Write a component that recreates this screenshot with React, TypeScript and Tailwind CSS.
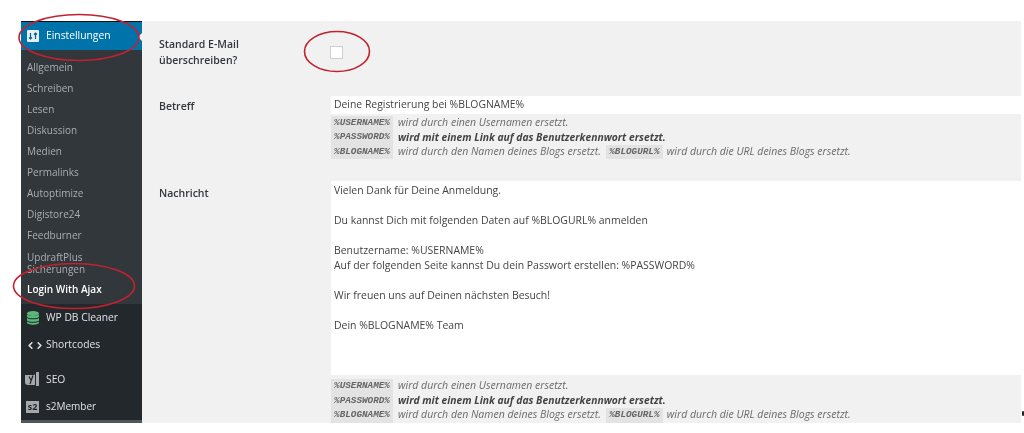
import { ChevronLeft, ChevronRight } from "lucide-react";

const subItems = ["Allgemein", "Schreiben", "Lesen", "Diskussion", "Medien", "Permalinks", "Autoptimize", "Digistore24", "Feedburner"];

const Code = ({ children, width = "w-[62px]" }: { children: string; width?: string }) => (
  <code className={`${width} flex h-[14.5px] items-center justify-center bg-[#e3e3e3] font-['Liberation_Mono',monospace] text-[9.3px] font-bold italic text-[#666]`}>
    {children}
  </code>
);

const Placeholders = () => (
  <div className="text-[10.5px] italic text-[#6a6a6a]">
    <div className="flex h-[14.5px] items-center gap-[5px]">
      <Code>%USERNAME%</Code>
      <span>wird durch einen Usernamen ersetzt.</span>
    </div>
    <div className="flex h-[14.5px] items-center gap-[5px] text-[10.3px] font-bold text-[#444]">
      <Code>%PASSWORD%</Code>
      <span>wird mit einem Link auf das Benutzerkennwort ersetzt.</span>
    </div>
    <div className="flex h-[14.5px] items-center gap-[5px]">
      <Code>%BLOGNAME%</Code>
      <span>wird durch den Namen deines Blogs ersetzt.</span>
      <Code width="w-[57px]">%BLOGURL%</Code>
      <span className="-ml-[1px]">wird durch die URL deines Blogs ersetzt.</span>
    </div>
  </div>
);

const Sidebar = () => (
  <div className="flex h-[402px] w-[121px] shrink-0 flex-col bg-[#23282d] text-[10.3px]">
    <div className="h-[1px] bg-[#111]" />
    {/* active menu */}
    <div className="relative flex h-[28px] items-center gap-[7px] bg-[#0073aa] pl-[6px] text-white">
      <svg width="12" height="12" viewBox="0 0 12 12">
        <rect width="12" height="12" rx="1" fill="#e6f1f6" />
        <path d="M3.500 3v6M2 7.500 3.500 9 5 7.500M8.500 9V3M7 4.500 8.500 3 10 4.500" stroke="#0a5f8a" strokeWidth="1.200" fill="none" />
      </svg>
      <span>Einstellungen</span>
      <div className="absolute top-[11px] right-0 h-0 w-0 border-y-[4px] border-r-[4px] border-y-transparent border-r-[#f1f1f1]" />
    </div>
    {/* submenu */}
    <div className="bg-[#32373c] pt-[7px] pb-[5px] pl-[6px] text-[10px] text-[#a9aeb3]">
      {subItems.map((item) => (
        <div key={item} className="flex h-[21px] items-center">
          {item}
        </div>
      ))}
      <div className="py-[4.5px] leading-[12px]">
        UpdraftPlus
        <br />
        Sicherungen
      </div>
      <div className="mt-[1px] flex h-[19px] items-center text-[10px] font-semibold text-white">Login With Ajax</div>
    </div>
    <div className="flex h-[28px] items-center gap-[7px] pl-[6px] font-medium text-[#dfe2e4]">
      <svg width="12" height="14" viewBox="0 0 12 14">
        <ellipse cx="6" cy="2.500" rx="6" ry="2.500" fill="#5cb87a" />
        <path d="M0 3.500c1 1.800 11 1.800 12 0v2.500c-1 1.800-11 1.800-12 0zM0 7c1 1.800 11 1.800 12 0v2.500c-1 1.800-11 1.800-12 0zM0 10.500c1 1.800 11 1.800 12 0v1c0 3-12 3-12 0z" fill="#5cb87a" />
      </svg>
      <span>WP DB Cleaner</span>
    </div>
    <div className="flex h-[26px] items-center pl-[4px] text-[#dfe2e4]">
      <ChevronLeft size={11} strokeWidth={3.5} className="text-[#dfe2e4]" />
      <ChevronRight size={11} strokeWidth={3.5} className="-ml-[2px] text-[#dfe2e4]" />
      <span className="ml-[1px]">Shortcodes</span>
    </div>
    <div className="mt-[8px] flex h-[27px] items-center gap-[7px] pl-[4px] text-[#dfe2e4]">
      <svg width="14" height="15" viewBox="0 0 14 15">
        <path d="M0 3h9l1 -1v11H3a3 3 0 0 1-3-3z" fill="#a6a9ac" />
        <path d="M4 4.500l2.200 4 1.800-5M6.200 8.500 5 12" stroke="#23282d" strokeWidth="1.300" fill="none" />
        <path d="M11 0h3v14h-3z" fill="#a6a9ac" />
      </svg>
      <span>SEO</span>
    </div>
    <div className="flex h-[27px] items-center gap-[7px] pl-[5px] text-[#dfe2e4]">
      <div className="flex h-[12px] w-[13px] items-center justify-center bg-[#a6a9ac] text-[9px] leading-none font-bold text-[#23282d]">
        s2
      </div>
      <span className="text-[10px]">s2Member</span>
    </div>
    <div className="mt-auto h-[3px] bg-[#50565b]" />
  </div>
);

export default function App() {
  return (
    <div className="relative h-[433px] w-[1024px] overflow-hidden bg-white font-['Open_Sans',sans-serif] blur-[0.45px]">
      <div className="flex pt-[21px] pl-[21px]">
        <Sidebar />
        <div className="flex h-[402px] w-[879px] bg-[#f1f1f1] text-[10.5px] text-[#32373c]">
          {/* labels */}
          <div className="w-[189px] shrink-0 pt-[15px] pl-[17px] leading-[16px] font-semibold">
            <div className="h-[62px]">
              Standard E-Mail
              <br />
              überschreiben?
            </div>
            <div className="h-[87px]">Betreff</div>
            <div>Nachricht</div>
          </div>
          <div className="min-w-0 flex-1">
            <div className="-ml-[1px] h-[75px] pt-[25px]">
              <div className="h-[13px] w-[13px] border border-[#cfcfcf] bg-white" />
            </div>
            <div className="flex h-[18px] items-center bg-white pl-[3px] text-[10.4px] text-[#444]">
              Deine Registrierung bei %BLOGNAME%
            </div>
            <div className="h-[67px] pt-[1.500px]">
              <Placeholders />
            </div>
            <div className="h-[194px] bg-white pt-[2px] pl-[3px] text-[10.45px] leading-[15px] whitespace-pre-line text-[#444]">
              {"Vielen Dank für Deine Anmeldung.\n\nDu kannst Dich mit folgenden Daten auf %BLOGURL% anmelden\n\nBenutzername: %USERNAME%\nAuf der folgenden Seite kannst Du dein Passwort erstellen: %PASSWORD%\n\nWir freuen uns auf Deinen nächsten Besuch!\n\nDein %BLOGNAME% Team"}
            </div>
            <div className="pt-[4px]">
              <Placeholders />
            </div>
          </div>
        </div>
      </div>

      {/* hand drawn annotations on top of the screenshot */}
      <svg className="absolute top-0 left-0" width="1024" height="433" viewBox="0 0 1024 433" fill="none">
        <ellipse cx="79" cy="37.500" rx="60" ry="23" stroke="#c2222f" strokeWidth="1.600" />
        <ellipse cx="337" cy="51.500" rx="32.500" ry="20" stroke="#c2222f" strokeWidth="1.600" />
        <ellipse cx="74" cy="286" rx="60.500" ry="22.500" stroke="#c2222f" strokeWidth="1.600" />
      </svg>
      <div className="absolute top-[411px] left-[1022px] h-[5px] w-[2px] rounded-full bg-[#222]" />
    </div>
  );
}
